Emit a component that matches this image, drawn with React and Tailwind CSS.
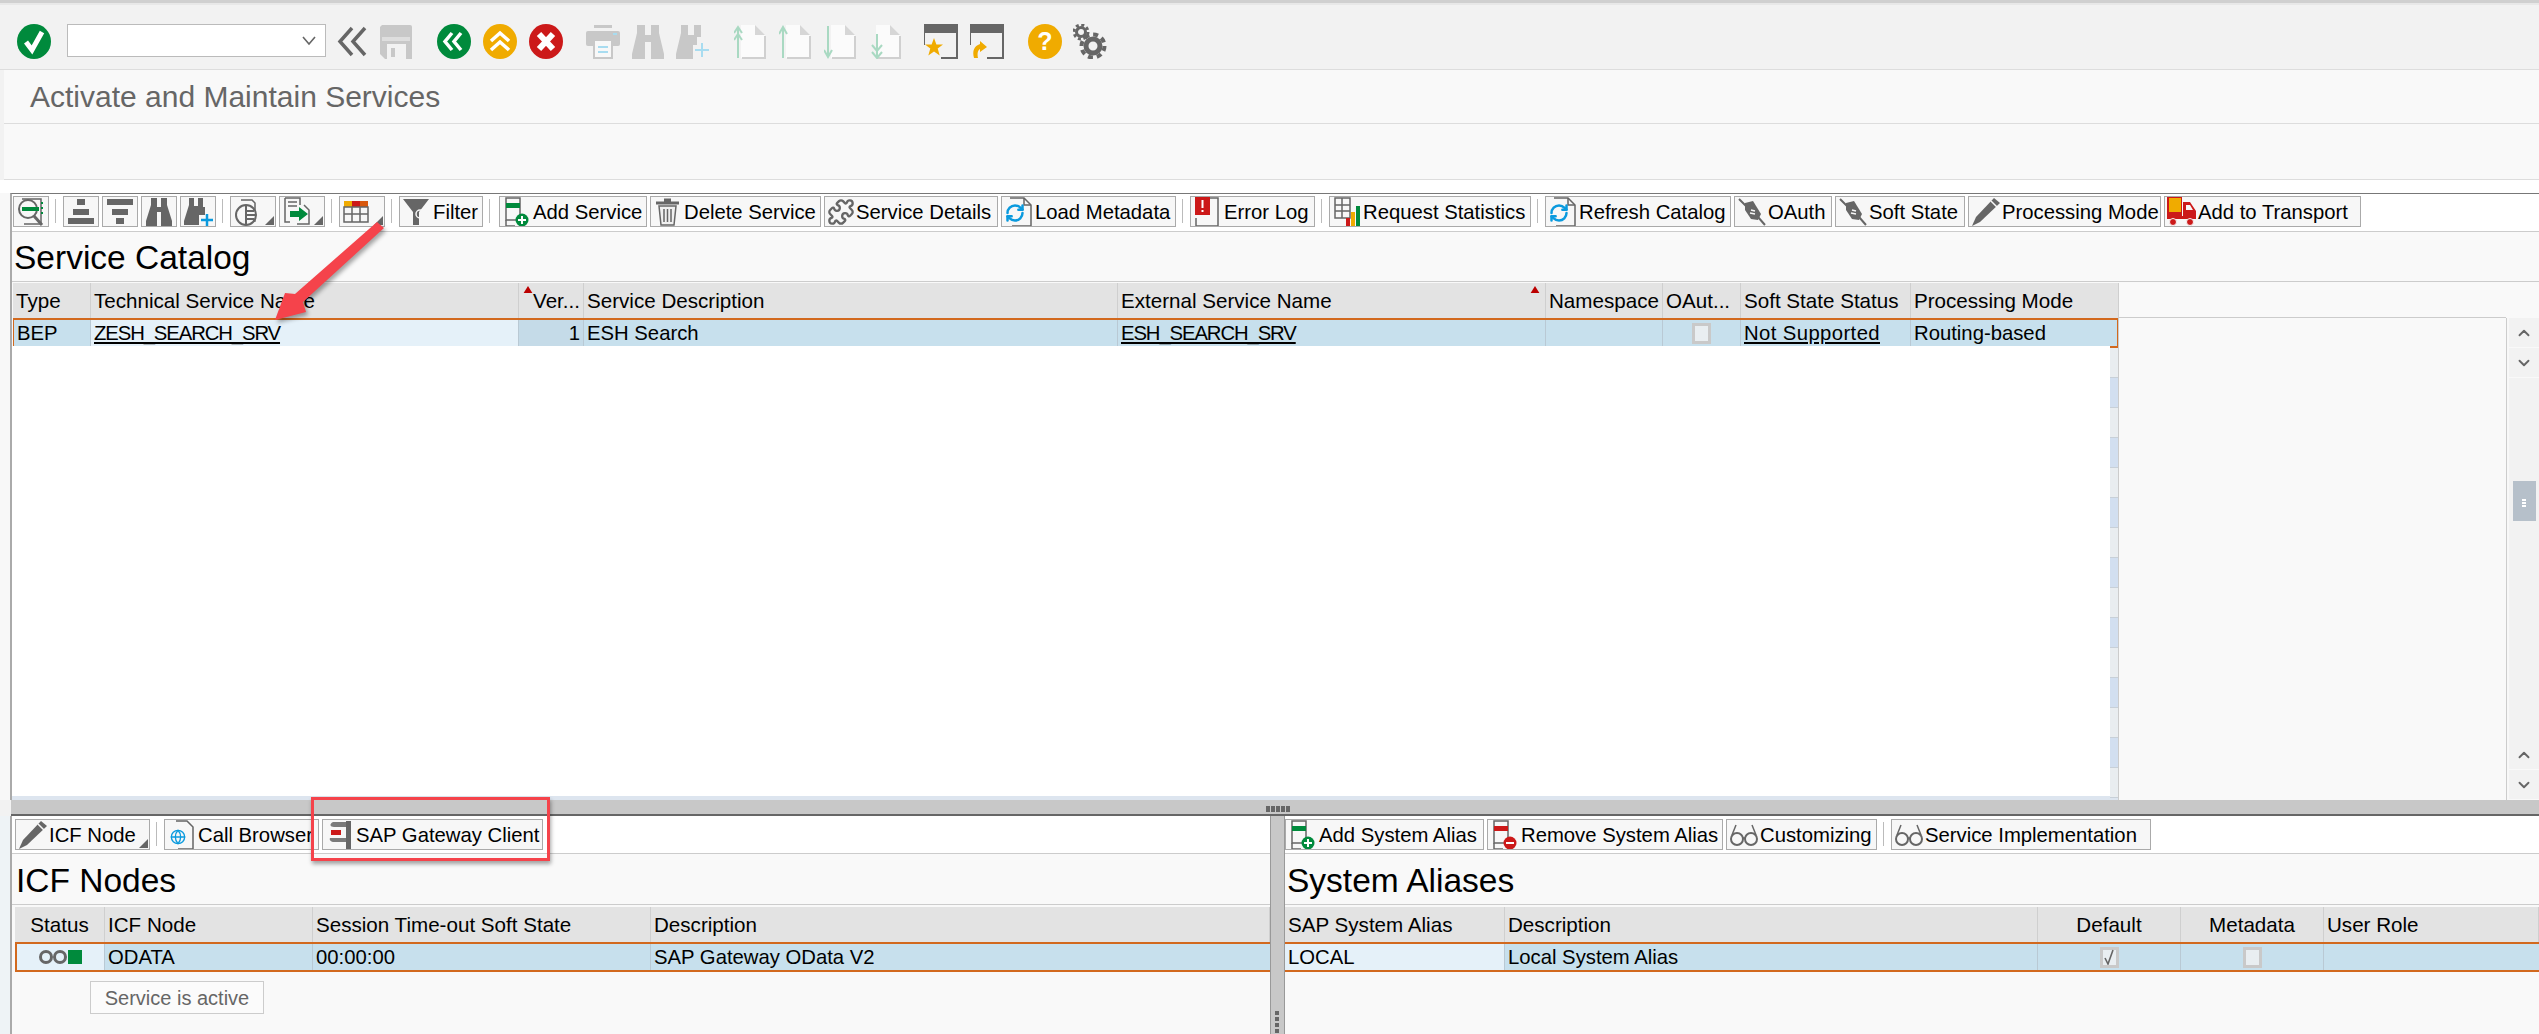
import { Puzzle, RefreshCw, Globe, ChevronUp, ChevronDown } from 'lucide-react';

const GREY = '#666666';
const OFF = '#c8c8c8';
const MINT = '#a9d9c2';

/* ---- big toolbar icons ---- */
const Round = ({ color, children }) => (
  <svg viewBox="0 0 34 35" className="w-[34px] h-[35px] shrink-0">
    <ellipse cx="17" cy="17.5" rx="17" ry="17.5" fill={color} />
    {children}
  </svg>
);

const Big = ({ children, w = 'w-[34px]', box = '0 0 34 35' }) => (
  <svg viewBox={box} className={`${w} h-[35px] shrink-0`}>{children}</svg>
);

const PageUpDown = ({ arrow }) => (
  <Big>
    <path d="M7 1h14l10 10v23H7z" fill="#fbfbfb" />
    <path d="M21 1l10 10H21z" fill="#d6d6d6" />
    <path d="M8 34h23V12" fill="none" stroke="#d0d0d0" strokeWidth="2" />
    <path d={arrow} fill="none" stroke={MINT} strokeWidth="2" />
  </Big>
);

const WindowIcon = ({ children }) => (
  <Big>
    <rect x="0" y="0" width="34" height="9" fill={GREY} />
    <path d="M0 9v12M33 9v25H17" fill="none" stroke={GREY} strokeWidth="2" />
    {children}
  </Big>
);

const TopToolbar = () => (
  <div className="h-[65px] bg-[#f2f2f2] border-b border-[#dddddd] flex items-start pt-[19px] pl-[17px]">
    <Round color="#008a3c">
      <path d="M9 18l6 8L25 8" fill="none" stroke="#fff" strokeWidth="5" />
    </Round>
    <div className="ml-[16px] w-[259px] h-[33px] bg-white border border-[#bbbbbb] flex items-center justify-end pr-[9px]">
      <svg viewBox="0 0 14 10" className="w-[14px] h-[10px]"><path d="M1 1l6 7 6-7" fill="none" stroke={GREY} strokeWidth="1.6" /></svg>
    </div>
    <div className="ml-[11px]">
      <Big w="w-[30px]" box="0 0 30 35">
        <path d="M15 4L3 17.500l12 13.500M28 4L16 17.500l12 13.500" fill="none" stroke={GREY} strokeWidth="3.500" />
      </Big>
    </div>
    <div className="ml-[12px]">
      <Big>
        <path d="M3 1h28a2 2 0 012 2v32H6l-5-5V3z" fill={OFF} />
        <rect x="3" y="13" width="28" height="4" fill="#dedede" />
        <rect x="8" y="20" width="19" height="15" fill="#f2f2f2" />
        <rect x="12" y="24" width="4" height="9" fill={OFF} />
      </Big>
    </div>
    <div className="ml-[24px] flex gap-[12px]">
      <Round color="#008a3c">
        <path d="M15 9l-7 8.5 7 8.5M24 9l-7 8.5 7 8.5" fill="none" stroke="#fff" strokeWidth="3.5" />
      </Round>
      <Round color="#f0ab00">
        <path d="M8 17l9-8 9 8M8 26l9-8 9 8" fill="none" stroke="#fff" strokeWidth="3.5" />
      </Round>
      <Round color="#cc1919">
        <path d="M10 10l14 15M24 10L10 25" fill="none" stroke="#fff" strokeWidth="6" />
      </Round>
    </div>
    <div className="ml-[23px]">
      <Big>
        <rect x="8" y="1" width="18" height="3" fill={OFF} />
        <rect x="0" y="7" width="34" height="15" rx="2" fill={OFF} />
        <rect x="27" y="9" width="4" height="2" fill="#a8dcf0" />
        <rect x="8" y="16" width="18" height="18" fill="#f8f8f8" stroke={OFF} strokeWidth="2" />
        <path d="M12 23h10M12 28h10" stroke="#a8dcf0" strokeWidth="2" />
      </Big>
    </div>
    <div className="ml-[12px]">
      <Big w="w-[32px]" box="0 0 32 35">
        <path d="M5 1h8v10h6V1h8v8l5 21v5H19V18h-6v17H0v-5L5 9z" fill={OFF} />
      </Big>
    </div>
    <div className="ml-[12px]">
      <Big>
        <path d="M5 1h7v10h6V1h7v12h-4v8h-4v14H0v-5L5 9z" fill={OFF} />
        <path d="M26 19v14M19 26h14" stroke="#a8dcf0" strokeWidth="2" />
      </Big>
    </div>
    <div className="ml-[24px] flex gap-[11px]">
      <PageUpDown arrow="M4 34V3M0 9l4-6 4 6M0 16l4-6 4 6" />
      <PageUpDown arrow="M4 34V3M0 10l4-7 4 7" />
      <PageUpDown arrow="M4 2v31M0 26l4 7 4-7" />
      <PageUpDown arrow="M8 10v24M3 21l5 6 5-6M3 28l5 6 5-6" />
    </div>
    <div className="ml-[21px] flex gap-[12px]">
      <WindowIcon>
        <path d="M10 14l2.4 6.5H19l-5.3 4 2 7L10 27.5 4.300 31.500l2-7L1 20.500h6.600z" fill="#f0ab00" />
      </WindowIcon>
      <WindowIcon>
        <path d="M4 34c-2-7 0-12 6-14v-3l7 6-7 5v-3c-2 1-3 4-2 9z" fill="#f0ab00" />
      </WindowIcon>
    </div>
    <div className="ml-[24px]">
      <Round color="#f0ab00">
        <text x="17" y="26" textAnchor="middle" fontSize="25" fontWeight="700" fill="#fff" fontFamily="Liberation Sans, sans-serif">?</text>
      </Round>
    </div>
    <div className="ml-[11px]">
      <Big>
        <circle cx="8" cy="8" r="4.500" fill="none" stroke={GREY} strokeWidth="3" />
        <circle cx="8" cy="8" r="7" fill="none" stroke={GREY} strokeWidth="3" strokeDasharray="3 2.500" />
        <circle cx="20" cy="22" r="7" fill="none" stroke={GREY} strokeWidth="5" />
        <circle cx="20" cy="22" r="11.500" fill="none" stroke={GREY} strokeWidth="4" strokeDasharray="5 4" />
      </Big>
    </div>
  </div>
);

/* ---- small button icons ---- */
const Ico = ({ children }) => (
  <svg viewBox="0 0 30 30" className="w-[30px] h-[30px] shrink-0">{children}</svg>
);

const Corner = () => (
  <svg viewBox="0 0 8 8" className="absolute right-[1px] bottom-[1px] w-[9px] h-[9px]">
    <path d="M8 0v8H0z" fill={GREY} />
  </svg>
);

const FindIcon = () => (
  <Ico>
    <path d="M6 2h19v25H8" fill="none" stroke={GREY} strokeWidth="1.500" />
    <circle cx="12" cy="12" r="9" fill="#f7f7f7" stroke={GREY} strokeWidth="2" />
    <rect x="6" y="10" width="17" height="4" fill="#008a3c" />
    <path d="M25 6h2M25 11h2M25 16h2" stroke="#008a3c" strokeWidth="2" />
    <path d="M18 19l8 9" stroke={GREY} strokeWidth="3" />
  </Ico>
);
const SortUp = () => (
  <Ico>
    <rect x="11" y="2" width="8" height="6" fill={GREY} />
    <rect x="7" y="12" width="16" height="6" fill={GREY} />
    <rect x="2" y="21" width="26" height="6" fill={GREY} />
  </Ico>
);
const SortDown = () => (
  <Ico>
    <rect x="2" y="2" width="26" height="6" fill={GREY} />
    <rect x="7" y="12" width="16" height="6" fill={GREY} />
    <rect x="11" y="21" width="8" height="6" fill={GREY} />
  </Ico>
);
const FindIco = () => (
  <Ico>
    <path d="M7 1h6v9h4V1h6v7l5 16v5H17V15h-4v14H2v-5L7 8z" fill={GREY} />
  </Ico>
);
const FindNext = () => (
  <Ico>
    <path d="M6 1h5v8h4V1h5v9h2v8h-6v10H1v-4L6 8z" fill={GREY} />
    <path d="M24 17v12M18 23h12" stroke="#0a9ade" strokeWidth="2.500" />
  </Ico>
);
const Sum = () => (
  <Ico>
    <path d="M8 3h11l3 3v18h-4" fill="none" stroke={GREY} strokeWidth="1.500" />
    <circle cx="13" cy="18" r="10" fill="#f7f7f7" stroke={GREY} strokeWidth="2" />
    <path d="M13 9v18M13 14h8M13 18h9M13 22h8" stroke={GREY} strokeWidth="2" />
  </Ico>
);
const ExportIcon = () => (
  <Ico>
    <path d="M3 1h15v7M3 1v24h5" fill="none" stroke={GREY} strokeWidth="1.500" />
    <path d="M6 5h9M6 9h9" stroke={GREY} strokeWidth="1.500" />
    <path d="M8 14h9v-4l9 7-9 7v-4H8z" fill="#008a3c" />
    <path d="M22 8l5 5v14H15" fill="none" stroke={GREY} strokeWidth="1.500" />
  </Ico>
);
const LayoutIcon = () => (
  <Ico>
    <rect x="2" y="4" width="8" height="6" fill="#f0ab00" />
    <rect x="10" y="4" width="8" height="6" fill="#cc1919" />
    <rect x="18" y="4" width="8" height="6" fill="#d9580d" />
    <path d="M2 10h24v15H2zM2 17h24M10 10v15M18 10v15" fill="none" stroke={GREY} strokeWidth="1.500" />
  </Ico>
);
const FilterIcon = () => (
  <Ico>
    <path d="M1 2h26L17 15v13h-6V15z" fill={GREY} />
    <circle cx="18" cy="17" r="4" fill="none" stroke="#f7f7f7" strokeWidth="1.500" />
  </Ico>
);
const RowIcon = ({ color, minus }) => (
  <Ico>
    <path d="M4 1h14v22H4zM4 29h9" fill="none" stroke={GREY} strokeWidth="1.500" />
    <path d="M4 23v6" stroke={GREY} strokeWidth="1.500" />
    <rect x="4" y="6" width="14" height="5" fill={color} />
    <circle cx="20" cy="23" r="6.500" fill={color} />
    <path d={minus ? 'M16 23h8' : 'M16 23h8M20 19v8'} stroke="#fff" strokeWidth="2" />
  </Ico>
);
const Trash = () => (
  <Ico>
    <path d="M11 3h7M3 6h23" stroke={GREY} strokeWidth="3" />
    <path d="M6 9l2 19h13l2-19z" fill="#f0f0f0" stroke={GREY} strokeWidth="1.500" />
    <path d="M11 12v13M14.500 12v13M18 12v13" stroke={GREY} strokeWidth="1.500" />
  </Ico>
);
const Details = () => <Puzzle size={28} color={GREY} strokeWidth={2} className="shrink-0" />;
const RefreshDoc = () => (
  <span className="relative w-[30px] h-[30px] shrink-0">
    <svg viewBox="0 0 30 30" className="w-[30px] h-[30px]">
      <path d="M6 1h14l7 7v21H8" fill="#f7f7f7" stroke={GREY} strokeWidth="1.500" />
      <path d="M20 1v7h7" fill="none" stroke={GREY} strokeWidth="1.500" />
    </svg>
    <RefreshCw size={20} color="#0a9ade" strokeWidth={3} className="absolute left-[1px] top-[6px]" />
  </span>
);
const ErrorIcon = () => (
  <Ico>
    <rect x="2" y="0" width="15" height="18" fill="#cc1919" />
    <rect x="8.500" y="3" width="2" height="8" fill="#fff" />
    <rect x="8.500" y="13" width="2" height="2" fill="#fff" />
    <path d="M17 1h8v28H3v-8" fill="none" stroke={GREY} strokeWidth="1.500" />
  </Ico>
);
const Stats = () => (
  <Ico>
    <path d="M3 1h15v20H3zM3 8h15M3 14h15M10 1v20" fill="none" stroke={GREY} strokeWidth="1.500" />
    <rect x="14" y="21" width="4" height="8" fill="#cc1919" />
    <rect x="19" y="15" width="4" height="14" fill="#f0ab00" />
    <rect x="24" y="9" width="4" height="20" fill="#008a3c" />
  </Ico>
);
const Plug = () => (
  <Ico>
    <path d="M2 2l7 7M21 20l7 8" stroke={GREY} strokeWidth="2" />
    <path d="M8 6l8-2 8 13-3 6-7-1L8 13z" fill={GREY} />
    <path d="M14 13l4 1M13 16l5 1" stroke="#f7f7f7" strokeWidth="1.500" />
  </Ico>
);
const Pencil = () => (
  <Ico>
    <path d="M23 1l6 5L9 25 1 29l4-9z" fill={GREY} />
    <path d="M20 4l6 6" stroke="#f7f7f7" strokeWidth="1.500" />
  </Ico>
);
const Truck = () => (
  <Ico>
    <rect x="0" y="0" width="15" height="19" fill="#cc1919" />
    <rect x="2" y="1" width="12" height="14" fill="#f0ab00" />
    <path d="M16 5h7l6 9v8H0v-3h16z" fill="#cc1919" />
    <path d="M19 8h4l3 5h-7z" fill="#f7f7f7" />
    <circle cx="6" cy="25" r="3.500" fill="#cc1919" stroke="#f7f7f7" />
    <circle cx="23" cy="25" r="3.500" fill="#cc1919" stroke="#f7f7f7" />
  </Ico>
);
const BrowserDoc = () => (
  <span className="relative w-[30px] h-[30px] shrink-0">
    <svg viewBox="0 0 30 30" className="w-[30px] h-[30px]">
      <path d="M9 1h11l6 6v22H11" fill="#f7f7f7" stroke={GREY} strokeWidth="1.500" />
    </svg>
    <Globe size={16} color="#0a9ade" strokeWidth={2} className="absolute left-[3px] top-[9px]" />
  </span>
);
const Clamp = () => (
  <Ico>
    <path d="M8 2h16v5H9C5 7 4 4 8 2z" fill="#7a7a7a" />
    <path d="M5 18h17v4H9c-3 0-5-2-4-4z" fill="#7a7a7a" />
    <rect x="21" y="1" width="5" height="28" fill={GREY} />
    <rect x="6" y="10" width="10" height="5" fill="#cc1919" />
  </Ico>
);
const Glasses = () => (
  <Ico>
    <circle cx="8" cy="19" r="6" fill="none" stroke={GREY} strokeWidth="2" />
    <circle cx="22" cy="19" r="6" fill="none" stroke={GREY} strokeWidth="2" />
    <path d="M14 18h2M3 15L7 5M27 15L23 5" fill="none" stroke={GREY} strokeWidth="1.500" />
  </Ico>
);

/* ---- toolbar bits ---- */
const Btn = ({ w, icon, label, menu }) => (
  <div className={`${w} relative h-[31px] shrink-0 bg-[#f7f7f7] border border-[#aaaaaa] flex items-center pl-[2px] gap-[1px] overflow-hidden whitespace-nowrap text-[20.3px] text-black`}>
    {icon}
    {label && <span className="pt-[2px]">{label}</span>}
    {menu && <Corner />}
  </div>
);

const Sep = ({ cls = 'mr-[4px]' }) => <div className={`ml-[3px] ${cls} w-px h-[24px] mt-[3px] bg-[#bbbbbb] shrink-0`} />;

const MainToolbar = () => (
  <div className="h-[38px] bg-white border-b border-[#cccccc] flex items-start gap-[3px] pt-[2px] pl-px">
    <Btn w="w-[36px]" icon={<FindIcon />} />
    <Sep />
    <Btn w="w-[36px]" icon={<SortUp />} />
    <Btn w="w-[36px]" icon={<SortDown />} />
    <Btn w="w-[36px]" icon={<FindIco />} />
    <Btn w="w-[36px]" icon={<FindNext />} />
    <Sep />
    <Btn w="w-[46px]" icon={<Sum />} menu />
    <Btn w="w-[46px]" icon={<ExportIcon />} menu />
    <Sep />
    <Btn w="w-[46px]" icon={<LayoutIcon />} menu />
    <Sep />
    <Btn w="w-[84px]" icon={<FilterIcon />} label="Filter" />
    <Sep cls="mr-[6px]" />
    <Btn w="w-[148px]" icon={<RowIcon color="#008a3c" />} label="Add Service" />
    <Btn w="w-[171px]" icon={<Trash />} label="Delete Service" />
    <Btn w="w-[174px]" icon={<Details />} label="Service Details" />
    <Btn w="w-[175px]" icon={<RefreshDoc />} label="Load Metadata" />
    <Sep />
    <Btn w="w-[125px]" icon={<ErrorIcon />} label="Error Log" />
    <Sep />
    <Btn w="w-[202px]" icon={<Stats />} label="Request Statistics" />
    <Sep />
    <Btn w="w-[186px]" icon={<RefreshDoc />} label="Refresh Catalog" />
    <Btn w="w-[98px]" icon={<Plug />} label="OAuth" />
    <Btn w="w-[130px]" icon={<Plug />} label="Soft State" />
    <Btn w="w-[193px]" icon={<Pencil />} label="Processing Mode" />
    <Btn w="w-[197px]" icon={<Truck />} label="Add to Transport" />
  </div>
);

/* ---- tables ---- */
const HEAD_CELL = 'h-full shrink-0 bg-[#e3e3e3] border-r border-[#cfcfcf] flex items-center px-[3px] pt-[2px] whitespace-nowrap overflow-hidden text-[20.6px] text-black';
const BODY_CELL = 'h-full shrink-0 border-r border-[#b9c9d4] flex items-center px-[3px] whitespace-nowrap overflow-hidden text-[20.3px] text-black';

const SortMark = ({ cls }) => (
  <svg viewBox="0 0 10 8" className={`absolute top-[3px] w-[10px] h-[7px] ${cls}`}>
    <path d="M5 0l5 8H0z" fill="#bb0000" />
  </svg>
);

const Check = ({ on }) => (
  <div className="w-[19px] h-[21px] border-[3px] border-[#c9c9c9] bg-[#e9eef1] flex items-center justify-center">
    {on && (
      <svg viewBox="0 0 12 16" className="w-[12px] h-[16px]"><path d="M2 9l3 6 5-14" fill="none" stroke={GREY} strokeWidth="1.600" /></svg>
    )}
  </div>
);

const ScrollBtn = ({ up }) => (
  <div className="h-[29px] mb-px bg-[#f2f2f2] flex items-center justify-center">
    {up
      ? <ChevronUp size={18} color={GREY} strokeWidth={2.500} />
      : <ChevronDown size={18} color={GREY} strokeWidth={2.500} />}
  </div>
);

const STRIPES = Array.from({ length: 15 }, (_, i) => i);

const ServiceCatalog = () => (
  <div className="flex-1 flex flex-col min-h-0 min-w-0">
    <div className="h-[50px] bg-[#f9f9f9] border-b border-[#cccccc] flex items-center pl-[2px] pt-[3px] text-[33.5px] text-black">Service Catalog</div>
    <div className="h-px bg-[#f9f9f9]" />
    <div className="h-[35px] flex bg-[#f9f9f9] pl-px">
      <div className={`${HEAD_CELL} w-[78px]`}>Type</div>
      <div className={`${HEAD_CELL} w-[428px]`}>Technical Service Name</div>
      <div className={`${HEAD_CELL} w-[65px] relative justify-end`}><SortMark cls="left-[4px]" />Ver...</div>
      <div className={`${HEAD_CELL} w-[534px]`}>Service Description</div>
      <div className={`${HEAD_CELL} w-[428px] relative`}><SortMark cls="right-[5px]" />External Service Name</div>
      <div className={`${HEAD_CELL} w-[117px]`}>Namespace</div>
      <div className={`${HEAD_CELL} w-[78px]`}>OAut...</div>
      <div className={`${HEAD_CELL} w-[170px]`}>Soft State Status</div>
      <div className={`${HEAD_CELL} w-[208px]`}>Processing Mode</div>
      <div className="w-[387px] h-full border-b border-[#cccccc]" />
    </div>
    <div className="flex-1 flex min-h-0">
      <div className="w-[2107px] flex shrink-0">
        <div className="w-[2098px] flex flex-col shrink-0">
          <div className="h-[28px] ml-px flex bg-[#c7e0ed] border-t-2 border-[#d2691e] border-l border-l-[#d2691e] shrink-0">
            <div className={`${BODY_CELL} w-[77px]`}>BEP</div>
            <div className={`${BODY_CELL} w-[428px] bg-[#e5f1f9]`}><span className="underline tracking-[-1.1px]">ZESH_SEARCH_SRV</span></div>
            <div className={`${BODY_CELL} w-[65px] justify-end bg-[#c5dbe8]`}>1</div>
            <div className={`${BODY_CELL} w-[534px]`}>ESH Search</div>
            <div className={`${BODY_CELL} w-[428px]`}><span className="underline tracking-[-1.1px]">ESH_SEARCH_SRV</span></div>
            <div className={`${BODY_CELL} w-[117px]`} />
            <div className={`${BODY_CELL} w-[78px] justify-center`}><Check /></div>
            <div className={`${BODY_CELL} w-[170px]`}><span className="underline tracking-[0.4px]">Not Supported</span></div>
            <div className={`${BODY_CELL} flex-1 border-r-0`}>Routing-based</div>
          </div>
          <div className="flex-1 bg-white" />
          <div className="h-[4px] bg-[#dde5ef]" />
        </div>
        <div className="w-[9px] flex flex-col border-r border-[#cccccc]">
          <div className="h-[30px] shrink-0 bg-[#c7e0ed] border-y-2 border-r border-[#d2691e]" />
          {STRIPES.map(i => (
            <div key={i} className={`h-[30px] shrink-0 border-b border-[#c8d0d8] ${i % 2 === 0 ? 'bg-[#e9edf0]' : 'bg-[#d2dff0]'}`} />
          ))}
          <div className="h-[4px] bg-[#dde5ef]" />
        </div>
      </div>
      <div className="w-[388px] bg-[#f9f9f9] border-r border-[#cccccc] shrink-0" />
      <div className="flex-1 ml-[2px] bg-[#f9f9f9] flex flex-col">
        <ScrollBtn up />
        <ScrollBtn />
        <div className="flex-1 bg-[#f2f2f2] flex flex-col items-center pt-[103px]">
          <div className="w-[23px] h-[40px] bg-[#b6c0ca] flex flex-col items-center justify-center gap-px pt-[4px]">
            <div className="w-[4px] h-[2px] bg-white" />
            <div className="w-[4px] h-[2px] bg-white" />
            <div className="w-[4px] h-[2px] bg-white" />
          </div>
        </div>
        <ScrollBtn up />
        <ScrollBtn />
      </div>
    </div>
  </div>
);

const IcfPane = () => (
  <div className="w-[1260px] shrink-0 flex flex-col bg-[#f9f9f9] border-l-2 border-[#aaaaaa] relative">
    <div className="h-[38px] bg-white border-b border-[#cccccc] flex items-start gap-[3px] pt-[3px] pl-[3px]">
      <Btn w="w-[135px]" icon={<Pencil />} label="ICF Node" menu />
      <Sep />
      <Btn w="w-[155px]" icon={<BrowserDoc />} label="Call Browser" />
      <Btn w="w-[221px]" icon={<Clamp />} label="SAP Gateway Client" />
    </div>
    <div className="h-[51px] border-b border-[#cccccc] flex items-center pl-[4px] pt-[5px] text-[33.5px] text-black">ICF Nodes</div>
    <div className="ml-[3px]">
      <div className="h-[35px] mt-[2px] flex">
        <div className={`${HEAD_CELL} w-[90px] justify-center`}>Status</div>
        <div className={`${HEAD_CELL} w-[208px]`}>ICF Node</div>
        <div className={`${HEAD_CELL} w-[338px]`}>Session Time-out Soft State</div>
        <div className={`${HEAD_CELL} flex-1`}>Description</div>
      </div>
      <div className="h-[30px] flex bg-[#c7e0ed] border-y-2 border-l-2 border-[#d2691e]">
        <div className={`${BODY_CELL} w-[88px] bg-[#e5f1f9] justify-center gap-0`}>
          <svg viewBox="0 0 46 16" className="w-[46px] h-[16px]">
            <circle cx="8" cy="8" r="5.500" fill="none" stroke={GREY} strokeWidth="3" />
            <circle cx="22" cy="8" r="5.500" fill="none" stroke={GREY} strokeWidth="3" />
            <rect x="30" y="1" width="14" height="14" fill="#008a3c" />
          </svg>
        </div>
        <div className={`${BODY_CELL} w-[208px]`}>ODATA</div>
        <div className={`${BODY_CELL} w-[338px]`}>00:00:00</div>
        <div className={`${BODY_CELL} flex-1 border-r-0`}>SAP Gateway OData V2</div>
      </div>
    </div>
    <div className="absolute left-[78px] top-[165px] w-[174px] h-[33px] border border-[#cccccc] bg-[#fbfbfb] flex items-center justify-center text-[20px] text-[#666666]">Service is active</div>
  </div>
);

const AliasPane = () => (
  <div className="flex-1 flex flex-col bg-[#f9f9f9] min-w-0">
    <div className="h-[38px] bg-white border-b border-[#cccccc] flex items-start gap-[3px] pt-[3px]">
      <Btn w="w-[199px]" icon={<RowIcon color="#008a3c" />} label="Add System Alias" />
      <Btn w="w-[236px]" icon={<RowIcon color="#cc1919" minus />} label="Remove System Alias" />
      <Btn w="w-[151px]" icon={<Glasses />} label="Customizing" />
      <Sep />
      <Btn w="w-[260px]" icon={<Glasses />} label="Service Implementation" />
    </div>
    <div className="h-[51px] border-b border-[#cccccc] flex items-center pl-[2px] pt-[5px] text-[33.5px] text-black">System Aliases</div>
    <div className="h-[35px] mt-[2px] flex">
      <div className={`${HEAD_CELL} w-[220px]`}>SAP System Alias</div>
      <div className={`${HEAD_CELL} w-[533px]`}>Description</div>
      <div className={`${HEAD_CELL} w-[143px] justify-center`}>Default</div>
      <div className={`${HEAD_CELL} w-[143px] justify-center`}>Metadata</div>
      <div className={`${HEAD_CELL} flex-1`}>User Role</div>
    </div>
    <div className="h-[30px] flex bg-[#c7e0ed] border-y-2 border-[#d2691e]">
      <div className={`${BODY_CELL} w-[220px] bg-[#e5f1f9]`}>LOCAL</div>
      <div className={`${BODY_CELL} w-[533px]`}>Local System Alias</div>
      <div className={`${BODY_CELL} w-[143px] justify-center`}><Check on /></div>
      <div className={`${BODY_CELL} w-[143px] justify-center`}><Check /></div>
      <div className={`${BODY_CELL} flex-1 border-r-0`} />
    </div>
  </div>
);

export default function App() {
  return (
    <div className="relative w-full h-[1034px] overflow-hidden bg-[#f2f2f2] flex flex-col font-['Liberation_Sans',Arial,sans-serif]">
      <div className="h-[5px] bg-[#d0d0d0] border-b-2 border-[#e8e8e8] shrink-0" />
      <TopToolbar />

      <div className="ml-[4px] shrink-0">
        <div className="h-[54px] bg-[#f9f9f9] border-b border-[#dddddd] flex items-center pl-[26px] text-[30px] text-[#666666]">Activate and Maintain Services</div>
        <div className="h-[56px] bg-[#f9f9f9] border-b border-[#dddddd]" />
      </div>

      <div className="h-[13px] bg-white shrink-0" />

      {/* top panel */}
      <div className="flex-1 flex min-h-0 bg-[#f8f8f8] pl-[10px]">
        <div className="flex-1 flex flex-col min-w-0 border-t border-[#777777] border-l-2 border-l-[#aaaaaa]">
          <MainToolbar />
          <ServiceCatalog />
        </div>
      </div>

      {/* splitter */}
      <div className="h-[16px] ml-[11px] shrink-0 bg-[#c8c8c8] border-b-2 border-[#666666]" />

      {/* bottom panes */}
      <div className="h-[218px] shrink-0 flex bg-[#eef3f6] pl-[10px]">
        <IcfPane />
        <div className="w-[15px] shrink-0 bg-[#c8c8c8] border-x border-[#999999]" />
        <AliasPane />
      </div>

      {/* grips */}
      <div className="absolute left-[1266px] top-[806px] flex gap-[1px]">
        {[0, 1, 2, 3, 4].map(i => <div key={i} className="w-[4px] h-[6px] bg-[#666666]" />)}
      </div>
      <div className="absolute left-[1275px] top-[1011px] flex flex-col gap-[2px]">
        {[0, 1, 2, 3, 4].map(i => <div key={i} className="w-[4px] h-[4px] bg-[#666666]" />)}
      </div>

      {/* callouts on the screenshot */}
      <svg viewBox="260 215 135 115" className="absolute left-[260px] top-[215px] w-[135px] h-[115px] drop-shadow-[2px_3px_2px_rgba(0,0,0,0.35)]">
        <polygon points="377,222 384,228 303,302 306,312 275,320 285,293 295,294" fill="#f5434b" />
      </svg>
      <div className="absolute left-[311px] top-[797px] w-[239px] h-[64px] border-[3px] border-[#f5434b] shadow-[1px_3px_4px_rgba(0,0,0,0.35)]" />
    </div>
  );
}
